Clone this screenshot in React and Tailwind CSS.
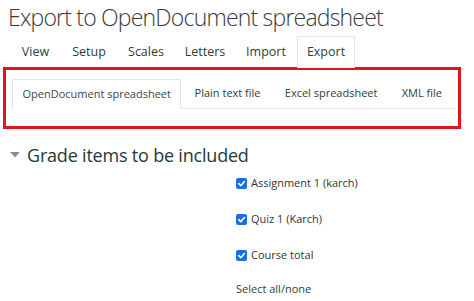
import React from "react";

function Check() {
  return (
    <span className="inline-flex h-[11px] w-[11px] items-center justify-center rounded-[2px] bg-[#1a6fe0]">
      <svg width="9" height="9" viewBox="0 0 10 10">
        <path d="M2 5.2 L4.2 7.4 L8.2 2.8" fill="none" stroke="white" strokeWidth="1.8" strokeLinecap="round" strokeLinejoin="round" />
      </svg>
    </span>
  );
}

export default function App() {
  const nav = [
    ["View", "w-[51px]"],
    ["Setup", "w-[56px]"],
    ["Scales", "w-[58px]"],
    ["Letters", "w-[60px]"],
    ["Import", "w-[62px]"],
  ];
  return (
    <div className="h-[301px] w-[474px] overflow-hidden bg-white font-['Open_Sans',sans-serif]">
      <div className="whitespace-nowrap pl-[8px] pt-[1px] text-[23px] font-light leading-[32px] tracking-[-0.8px] text-[#3a3a3a]">
        Export to OpenDocument spreadsheet
      </div>
      <div className="mt-[3px] flex h-[32px] pl-[10px] text-[12.5px] text-[#2a3f38]">
        {nav.map(([t, w]) => (
          <div key={t} className={`${w} flex items-center justify-center`}>{t}</div>
        ))}
        <div className="flex w-[58px] items-center justify-center border border-b-0 border-[#e3e6e8] bg-white">
          Export
        </div>
      </div>
      <div className="ml-[3px] mt-[-1px] h-[62px] w-[458px] border-[3px] border-[#e0161e] pl-[6px] pt-[9px]">
        <div className="flex h-[30px] w-[443px] whitespace-nowrap border-b border-[#e3e6e8] text-[11px] text-[#2a3f38]">
          <div className="mb-[-1px] flex w-[171px] items-center justify-center border border-b-0 border-[#e3e6e8] bg-white text-[#444]">
            OpenDocument spreadsheet
          </div>
          <div className="flex w-[93px] items-center justify-center">Plain text file</div>
          <div className="flex w-[116px] items-center justify-center">Excel spreadsheet</div>
          <div className="flex w-[67px] items-center justify-center">XML file</div>
        </div>
      </div>
      <div className="mt-[15px] flex h-[22px] items-center pl-[10px]">
        <svg width="10" height="6" viewBox="0 0 10 6" className="mr-[7px]">
          <path d="M0 0 L10 0 L5 5.5 Z" fill="#8a8f93" />
        </svg>
        <span className="whitespace-nowrap text-[18px] leading-[22px] tracking-[-0.2px] text-[#1d3b36]">Grade items to be included</span>
      </div>
      <div className="ml-[236px] mt-[-1px] flex flex-col text-[11px] text-[#333]">
        {["Assignment 1 (karch)", "Quiz 1 (Karch)", "Course total"].map((t) => (
          <div key={t} className="flex h-[36px] items-center">
            <Check />
            <span className="ml-[4px]">{t}</span>
          </div>
        ))}
        <div className="flex h-[32px] items-center text-[#2e3f38]">Select all/none</div>
      </div>
    </div>
  );
}
